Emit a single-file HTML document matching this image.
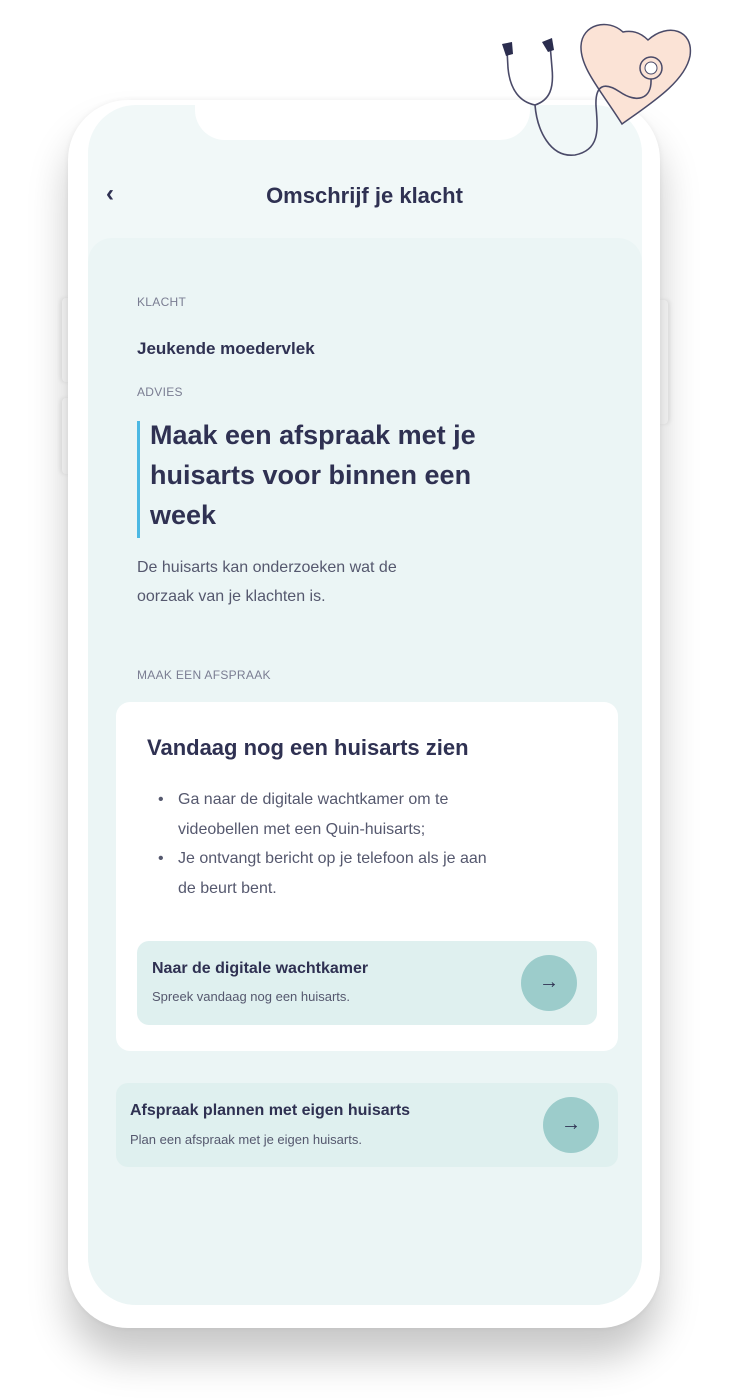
<!DOCTYPE html>
<html><head><meta charset="utf-8"><style>
*{margin:0;padding:0;box-sizing:border-box}
body{width:729px;height:1400px;background:#fff;position:relative;overflow:hidden;font-family:"Liberation Sans",sans-serif;color:#2f3152}
.abs{position:absolute}
.phone{left:68px;top:100px;width:592px;height:1228px;background:#fff;border-radius:60px;box-shadow:0 30px 40px rgba(0,0,0,.22),0 0 6px rgba(0,0,0,.06)}
.screen{left:88px;top:105px;width:554px;height:1200px;background:#f1f8f8;border-radius:48px;overflow:hidden}
.notch{left:195px;top:100px;width:335px;height:40px;background:#fff;border-radius:0 0 30px 30px}
.panel{left:88px;top:238px;width:554px;height:1067px;background:#ebf5f5;border-radius:24px 24px 48px 48px}
.lbl{font-size:12px;color:#7a7d92;letter-spacing:.3px}
.btn{background:#dff0ef;border-radius:12px}
.circ{width:56px;height:56px;border-radius:50%;background:#9ccccb;text-align:center;line-height:54px;font-size:20px;font-weight:bold;color:#2f3152}
</style></head><body>
<div class="abs" style="left:62px;top:298px;width:10px;height:84px;background:#fff;border-radius:4px;box-shadow:-2px 0 4px rgba(0,0,0,.08)"></div>
<div class="abs" style="left:62px;top:398px;width:10px;height:76px;background:#fff;border-radius:4px;box-shadow:-2px 0 4px rgba(0,0,0,.08)"></div>
<div class="abs" style="left:656px;top:300px;width:12px;height:124px;background:#fff;border-radius:4px;box-shadow:2px 0 4px rgba(0,0,0,.08)"></div>
<div class="abs phone"></div>
<div class="abs screen"></div>
<div class="abs notch"></div>
<div class="abs" style="left:106px;top:180px;font-size:24px;font-weight:bold">‹</div>
<div class="abs" style="left:0;width:729px;text-align:center;top:183px;font-size:22px;font-weight:bold">Omschrijf je klacht</div>
<div class="abs panel"></div>
<div class="abs lbl" style="left:137px;top:295px">KLACHT</div>
<div class="abs" style="left:137px;top:339px;font-size:17px;font-weight:bold">Jeukende moedervlek</div>
<div class="abs lbl" style="left:137px;top:385px">ADVIES</div>
<div class="abs" style="left:137px;top:421px;width:3px;height:117px;background:#4cb8e3"></div>
<div class="abs" style="left:150px;top:415px;width:385px;font-size:27px;font-weight:bold;line-height:40px">Maak een afspraak met je huisarts voor binnen een week</div>
<div class="abs" style="left:137px;top:553px;width:320px;font-size:16px;line-height:29px;color:#55586e">De huisarts kan onderzoeken wat de oorzaak van je klachten is.</div>
<div class="abs lbl" style="left:137px;top:668px">MAAK EEN AFSPRAAK</div>
<div class="abs" style="left:116px;top:702px;width:502px;height:349px;background:#fff;border-radius:14px"></div>
<div class="abs" style="left:147px;top:735px;font-size:22px;font-weight:bold">Vandaag nog een huisarts zien</div>
<div class="abs" style="left:158px;top:785px;width:340px;font-size:16px;line-height:29.5px;color:#55586e">
<div style="position:relative;padding-left:20px"><span style="position:absolute;left:0">•</span>Ga naar de digitale wachtkamer om te videobellen met een Quin-huisarts;</div>
<div style="position:relative;padding-left:20px"><span style="position:absolute;left:0">•</span>Je ontvangt bericht op je telefoon als je aan de beurt bent.</div></div>
<div class="abs btn" style="left:137px;top:941px;width:460px;height:84px"></div>
<div class="abs" style="left:152px;top:960px;font-size:16px;font-weight:bold">Naar de digitale wachtkamer</div>
<div class="abs" style="left:152px;top:989px;font-size:13px;color:#55586e">Spreek vandaag nog een huisarts.</div>
<div class="abs circ" style="left:521px;top:955px">→</div>
<div class="abs btn" style="left:116px;top:1083px;width:502px;height:84px"></div>
<div class="abs" style="left:130px;top:1102px;font-size:16px;font-weight:bold">Afspraak plannen met eigen huisarts</div>
<div class="abs" style="left:130px;top:1132px;font-size:13px;color:#55586e">Plan een afspraak met je eigen huisarts.</div>
<div class="abs circ" style="left:543px;top:1097px">→</div>
<svg class="abs" style="left:480px;top:0" width="249" height="260" viewBox="0 0 249 260">
<path d="M143 32 C128 18 102 24 101 46 C100 68 122 92 142 124 C170 104 205 82 210 56 C214 30 188 22 168 40 C160 32 152 30 143 32 Z" fill="#fbe3d6" stroke="#4a4a68" stroke-width="1.5"/>
<circle cx="171" cy="68" r="11" fill="#fbe3d6" stroke="#4a4a68" stroke-width="1.5"/>
<circle cx="171" cy="68" r="6" fill="#fff" stroke="#4a4a68" stroke-width="1"/>
<path d="M171 79 C172 100 156 103 140 92 C125 82 115 84 116 106 C118 130 120 150 95 155 C70 158 57 130 55 105 M55 105 C40 102 30 90 28 68 L27 50 M55 105 C70 100 74 88 72 68 L70 44" fill="none" stroke="#4a4a68" stroke-width="1.6"/>
<path d="M22 44 L32 42 L33 54 L26 56 Z" fill="#2b2d4e"/>
<path d="M62 42 L72 38 L74 50 L68 52 Z" fill="#2b2d4e"/>
</svg>
</body></html>
